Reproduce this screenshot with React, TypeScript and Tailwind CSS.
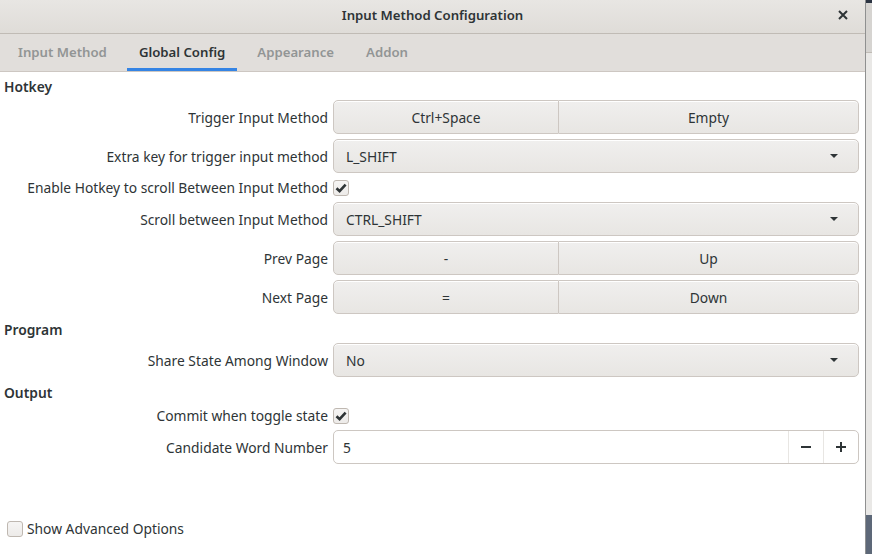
import React from 'react'

const font = { fontFamily: '"Noto Sans", "Open Sans", sans-serif' }

const Arrow = () => (
  <svg width="10" height="6" viewBox="0 0 10 6" className="shrink-0">
    <path d="M1 1 L9 1 L5 5 Z" fill="#2e3436" />
  </svg>
)

const Check = () => (
  <svg width="12" height="12" viewBox="0 0 12 12">
    <path d="M1.5 6.2 L4.6 9.2 L10.6 2.6" stroke="#2e3436" strokeWidth="2.6" fill="none" strokeLinejoin="miter" />
  </svg>
)

const btn =
  'h-[34px] flex items-center justify-center rounded-[5px] border border-[#cdc7c2] bg-gradient-to-b from-[#f0efee] to-[#e8e6e3] text-[#2e3436] shadow-[inset_0_1px_0_#fff]'

const Label = ({ children }: { children: React.ReactNode }) => (
  <div className="flex items-center justify-end text-right text-[#2e3436] whitespace-nowrap">{children}</div>
)

const Combo = ({ value }: { value: string }) => (
  <div className={btn + ' !justify-between pl-[12px] pr-[19px]'}>
    <span>{value}</span>
    <Arrow />
  </div>
)

const Pair = ({ a, b }: { a: string; b: string }) => (
  <div className="flex">
    <div className={btn + ' w-[226px] rounded-r-none'}>{a}</div>
    <div className={btn + ' flex-1 rounded-l-none border-l-0'}>{b}</div>
  </div>
)

const CheckBox = ({ checked }: { checked: boolean }) => (
  <div className="flex items-center h-[19px]">
    <div className="w-[16px] h-[16px] rounded-[3px] border border-[#bfb8b1] bg-gradient-to-b from-[#f6f5f4] to-[#edebe9] flex items-center justify-center">
      {checked && <Check />}
    </div>
  </div>
)

const Section = ({ title }: { title: string }) => (
  <div className="col-span-2 h-[19px] flex items-center pt-[2px] pl-[4px] font-semibold text-[#2e3436]">{title}</div>
)

const App = () => {
  const tabs = ['Input Method', 'Global Config', 'Appearance', 'Addon']
  return (
    <div className="flex w-[872px] h-[554px] overflow-hidden text-[13.8px] leading-[19px]" style={font}>
      <div className="w-[865px] h-full flex flex-col bg-white">
        <div className="h-[34px] shrink-0 flex items-center pb-[3px] relative bg-gradient-to-b from-[#e8e6e3] to-[#dfdcd8] border-b border-[#c0bbb5]">
          <div className="flex-1 text-center font-semibold text-[13.2px] text-[#2e3436]">Input Method Configuration</div>
          <div className="absolute right-[12px] top-[5px] w-[20px] h-[20px] flex items-center justify-center">
            <svg width="10" height="10" viewBox="0 0 10 10">
              <path d="M1 1 L9 9 M9 1 L1 9" stroke="#2e3436" strokeWidth="2" />
            </svg>
          </div>
        </div>
        <div className="h-[38px] shrink-0 flex items-stretch gap-[8px] bg-[#e1dedb] border-b border-[#cdc7c2] pl-[6px]">
          {tabs.map((t, i) => (
            <div
              key={t}
              className={
                'flex items-center px-[12px] pt-[2px] font-semibold text-[13.2px] border-b-[3px] ' +
                (i === 1 ? 'border-[#3584e4] text-[#2e3436]' : 'border-transparent text-[#929595]')
              }
            >
              {t}
            </div>
          ))}
        </div>
        <div className="flex-1 flex flex-col">
          <div className="grid grid-cols-[328px_1fr] gap-x-[5px] gap-y-[5px] pt-[4px] pr-[6px]">
            <Section title="Hotkey" />
            <Label>Trigger Input Method</Label>
            <Pair a="Ctrl+Space" b="Empty" />
            <Label>Extra key for trigger input method</Label>
            <Combo value="L_SHIFT" />
            <Label>Enable Hotkey to scroll Between Input Method</Label>
            <CheckBox checked />
            <Label>Scroll between Input Method</Label>
            <Combo value="CTRL_SHIFT" />
            <Label>Prev Page</Label>
            <Pair a="-" b="Up" />
            <Label>Next Page</Label>
            <Pair a="=" b="Down" />
            <Section title="Program" />
            <Label>Share State Among Window</Label>
            <Combo value="No" />
            <Section title="Output" />
            <Label>Commit when toggle state</Label>
            <CheckBox checked />
            <Label>Candidate Word Number</Label>
            <div className="h-[34px] flex rounded-[5px] border border-[#cdc7c2] bg-white text-[#2e3436]">
              <div className="flex-1 flex items-center pl-[9px]">5</div>
              <div className="w-[35px] flex items-center justify-center border-l border-[#e8e6e3]">
                <svg width="12" height="12" viewBox="0 0 12 12">
                  <path d="M1 6 H11" stroke="#2e3436" strokeWidth="2" />
                </svg>
              </div>
              <div className="w-[35px] flex items-center justify-center border-l border-[#e8e6e3]">
                <svg width="12" height="12" viewBox="0 0 12 12">
                  <path d="M1 6 H11 M6 1 V11" stroke="#2e3436" strokeWidth="2" />
                </svg>
              </div>
            </div>
          </div>
          <div className="flex-1" />
          <div className="flex items-center gap-[4px] pl-[7px] pb-[16px] text-[#2e3436]">
            <div className="w-[16px] h-[16px] rounded-[3px] border border-[#bfb8b1] bg-gradient-to-b from-[#f6f5f4] to-[#edebe9]" />
            <span>Show Advanced Options</span>
          </div>
        </div>
      </div>
      <div className="w-[1px] h-full bg-[#8f9090]" />
      <div className="flex-1 h-full flex flex-col bg-[#d6d4d1]">
        <div className="h-[3px] bg-[#2b3442]" />
        <div className="h-[50px] border-b border-[#c0bbb5]" />
        <div className="flex-1 bg-[#e9e8e6]" />
        <div className="h-[39px] bg-[#5d6878]" />
      </div>
    </div>
  )
}

export default App
